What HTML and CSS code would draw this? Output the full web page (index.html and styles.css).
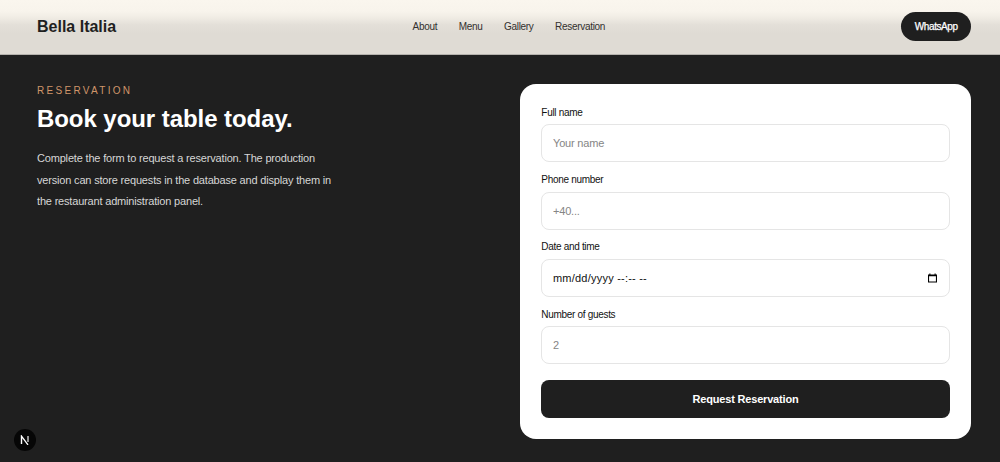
FILE: index.html
```html
<!DOCTYPE html>
<html lang="en">
<head>
<meta charset="utf-8">
<title>Bella Italia</title>
<link rel="stylesheet" href="styles.css">
</head>
<body>
<header class="header">
  <a class="logo">Bella Italia</a>
  <nav class="nav"><a>About</a><a>Menu</a><a>Gallery</a><a>Reservation</a></nav>
  <a class="whatsapp">WhatsApp</a>
</header>
<main class="reservation">
  <section class="intro">
    <p class="eyebrow">RESERVATION</p>
    <h1 class="title">Book your table today.</h1>
    <p class="copy">Complete the form to request a reservation. The production<br>version can store requests in the database and display them in<br>the restaurant administration panel.</p>
  </section>
  <form class="card">
    <label class="field"><span class="label">Full name</span><input class="input" type="text" placeholder="Your name"></label>
    <label class="field"><span class="label">Phone number</span><input class="input" type="text" placeholder="+40..."></label>
    <label class="field"><span class="label">Date and time</span>
      <span class="input date"><span class="date-text">mm/dd/yyyy --:-- --</span>
        <svg class="calendar" viewBox="0 0 10 10"><path d="M0 1h1.5V0h1.2v1h4.6V0h1.2v1H10v9H0zM1.2 3.1v5.7h7.6V3.1z" fill="#000" fill-rule="evenodd"/></svg>
      </span></label>
    <label class="field"><span class="label">Number of guests</span><input class="input" type="text" placeholder="2"></label>
    <button class="submit" type="button">Request Reservation</button>
  </form>
</main>
<div class="badge"><svg class="badge-icon" viewBox="0 0 10 10"><path d="M1.5 9V1.2L8 9.8" fill="none" stroke="#fff" stroke-width="1.4"/><path d="M8 1v6" stroke="#ddd" stroke-width="1.3"/></svg></div>
</body>
</html>
```
FILE: styles.css
```css
* { box-sizing: border-box; }
body {
  margin: 0;
  height: 462px;
  overflow: hidden;
  background: #1f1f1f;
  color: #1f1f1f;
  font-family: "Liberation Sans", Arial, sans-serif;
}
.header {
  height: 55px;
  padding: 0 29px 1px 37px;
  display: flex;
  justify-content: space-between;
  align-items: center;
  background: linear-gradient(#faf6ee 0, #f8f4ec 11px, #f1ede5 17px, #e3dfd8 25px, #dfdbd4 34px, #dfdbd4 100%);
  border-bottom: 1px solid #b5b2ad;
}
.logo { font-size: 16px; font-weight: 700; line-height: 20px; }
.nav { display: flex; gap: 21.5px; font-size: 10px; letter-spacing: -.3px; color: #33312f; }
.whatsapp {
  width: 69.5px;
  height: 29.33px;
  border-radius: 15px;
  background: #1f1f1f;
  color: #fff;
  font-size: 10px;
  line-height: 29px;
  letter-spacing: -.42px;
  text-align: center;
  -webkit-text-stroke: .25px #fff;
}
.reservation {
  padding: 29.33px 29px 0 37px;
  display: grid;
  grid-template-columns: 1fr 451px;
  align-items: start;
}
.eyebrow { margin: 0; font-size: 10px; line-height: 13.33px; letter-spacing: 2.3px; color: #cf966b; }
.title { margin: 8px 0 0; font-size: 24px; line-height: 26.67px; letter-spacing: -.06px; color: #fff; }
.copy { margin: 16px 0 0; font-size: 11px; line-height: 21.33px; letter-spacing: -.18px; color: #d6d6d6; }
.card {
  height: 354.67px;
  padding: 21.33px;
  display: flex;
  flex-direction: column;
  gap: 10.67px;
  background: #fff;
  border-radius: 16px;
}
.field { display: flex; flex-direction: column; gap: 5.33px; }
.label { font-size: 10px; line-height: 13.33px; letter-spacing: -.31px; color: #111; }
.input {
  width: 100%;
  height: 38px;
  padding: 0 10.67px;
  border: 1px solid #e5e5e5;
  border-radius: 8px;
  background: #fff;
  color: #111;
  font-family: inherit;
  font-size: 11px;
  letter-spacing: -.18px;
}
.input::placeholder { color: #858585; }
.date { display: flex; align-items: center; justify-content: space-between; }
.date-text { letter-spacing: .22px; }
.calendar { width: 9px; height: 10px; margin-right: 1px; }
.submit {
  height: 37.33px;
  margin-top: 5.33px;
  border: 0;
  border-radius: 8px;
  background: #1f1f1f;
  color: #fff;
  font-family: inherit;
  font-size: 11px;
  font-weight: 700;
  letter-spacing: -.18px;
}
.badge {
  position: absolute;
  left: 14px;
  top: 429px;
  width: 22px;
  height: 22px;
  display: grid;
  place-items: center;
  border-radius: 50%;
  background: #060606;
}
.badge-icon { width: 10px; height: 10px; }
```
